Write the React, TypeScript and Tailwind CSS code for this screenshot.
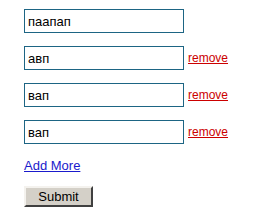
export default function App() {
  const rows = [
    { value: "паапап", removable: false },
    { value: "авп", removable: true },
    { value: "вап", removable: true },
    { value: "вап", removable: true },
  ];

  return (
    <div className="min-h-[215px] w-[274px] bg-white pl-6 pt-[9px] font-['Liberation_Sans',Arial,sans-serif]">
      <div className="flex flex-col gap-[13px]">
        {rows.map((row, i) => (
          <div key={i} className="flex items-center gap-1">
            <input
              defaultValue={row.value}
              className="h-6 w-40 border border-[#1d6584] bg-white px-[3px] text-[13px] text-black outline-none"
            />
            {row.removable && (
              <a href="#" className="text-[12px] text-[#cc0000] underline">
                remove
              </a>
            )}
          </div>
        ))}
      </div>
      <div className="mt-[13px] leading-[15px]">
        <a href="#" className="text-[13px] text-[#1a1acc] underline">
          Add More
        </a>
      </div>
      <button className="mt-[13px] block h-[21px] w-[69px] border-2 border-t-[#f4f2ee] border-l-[#f4f2ee] border-b-[#404040] border-r-[#404040] bg-[#d4d0c8] text-[13px] leading-[15px] text-black">
        Submit
      </button>
    </div>
  );
}
